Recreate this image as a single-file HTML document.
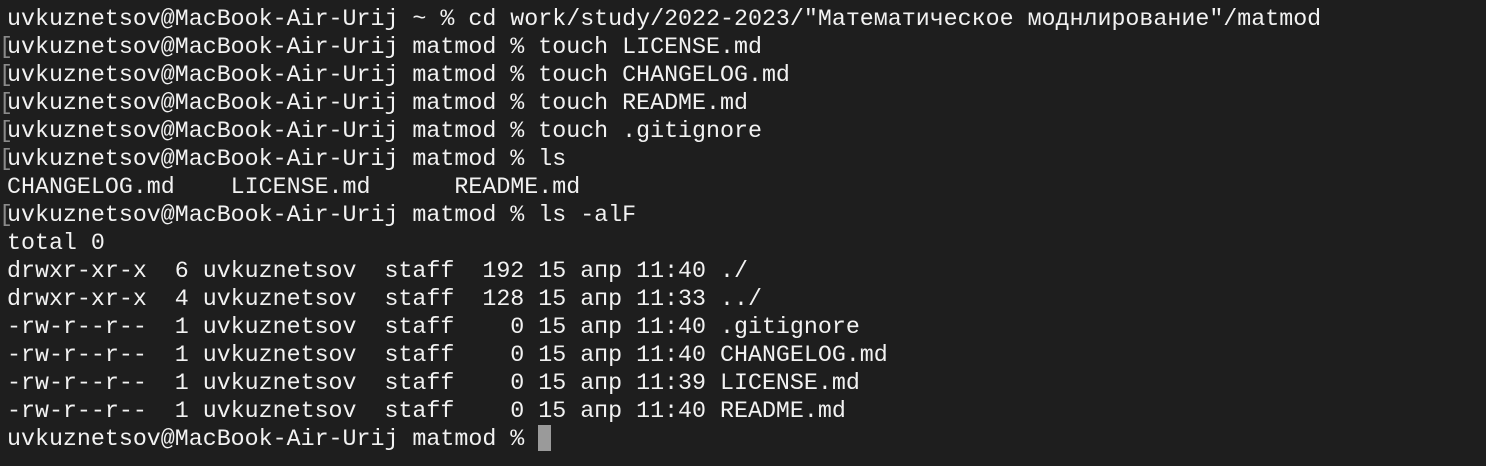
<!DOCTYPE html>
<html><head><meta charset="utf-8"><style>
html,body{margin:0;padding:0;background:#1e1e1e;width:1486px;height:466px;overflow:hidden}
pre{margin:0;padding:5px 0 0 7px;font-family:"Liberation Mono","DejaVu Sans Mono",monospace;font-size:23.3px;line-height:28px;color:#f2f2f2;white-space:pre}
.l{position:relative;display:block;height:28px}
.b{position:absolute;left:-8px;color:#8a8a8a}
.c{display:inline-block;width:13px;height:26px;background:#9a9a9a;vertical-align:-6px}
</style></head><body><pre><span class="l">uvkuznetsov@MacBook-Air-Urij ~ % cd work/study/2022-2023/"Математическое моднлирование"/matmod</span><span class="l"><span class="b">[</span>uvkuznetsov@MacBook-Air-Urij matmod % touch LICENSE.md</span><span class="l"><span class="b">[</span>uvkuznetsov@MacBook-Air-Urij matmod % touch CHANGELOG.md</span><span class="l"><span class="b">[</span>uvkuznetsov@MacBook-Air-Urij matmod % touch README.md</span><span class="l"><span class="b">[</span>uvkuznetsov@MacBook-Air-Urij matmod % touch .gitignore</span><span class="l"><span class="b">[</span>uvkuznetsov@MacBook-Air-Urij matmod % ls</span><span class="l">CHANGELOG.md    LICENSE.md      README.md</span><span class="l"><span class="b">[</span>uvkuznetsov@MacBook-Air-Urij matmod % ls -alF</span><span class="l">total 0</span><span class="l">drwxr-xr-x  6 uvkuznetsov  staff  192 15 апр 11:40 ./</span><span class="l">drwxr-xr-x  4 uvkuznetsov  staff  128 15 апр 11:33 ../</span><span class="l">-rw-r--r--  1 uvkuznetsov  staff    0 15 апр 11:40 .gitignore</span><span class="l">-rw-r--r--  1 uvkuznetsov  staff    0 15 апр 11:40 CHANGELOG.md</span><span class="l">-rw-r--r--  1 uvkuznetsov  staff    0 15 апр 11:39 LICENSE.md</span><span class="l">-rw-r--r--  1 uvkuznetsov  staff    0 15 апр 11:40 README.md</span><span class="l">uvkuznetsov@MacBook-Air-Urij matmod % <span class="c"></span></span></pre></body></html>
